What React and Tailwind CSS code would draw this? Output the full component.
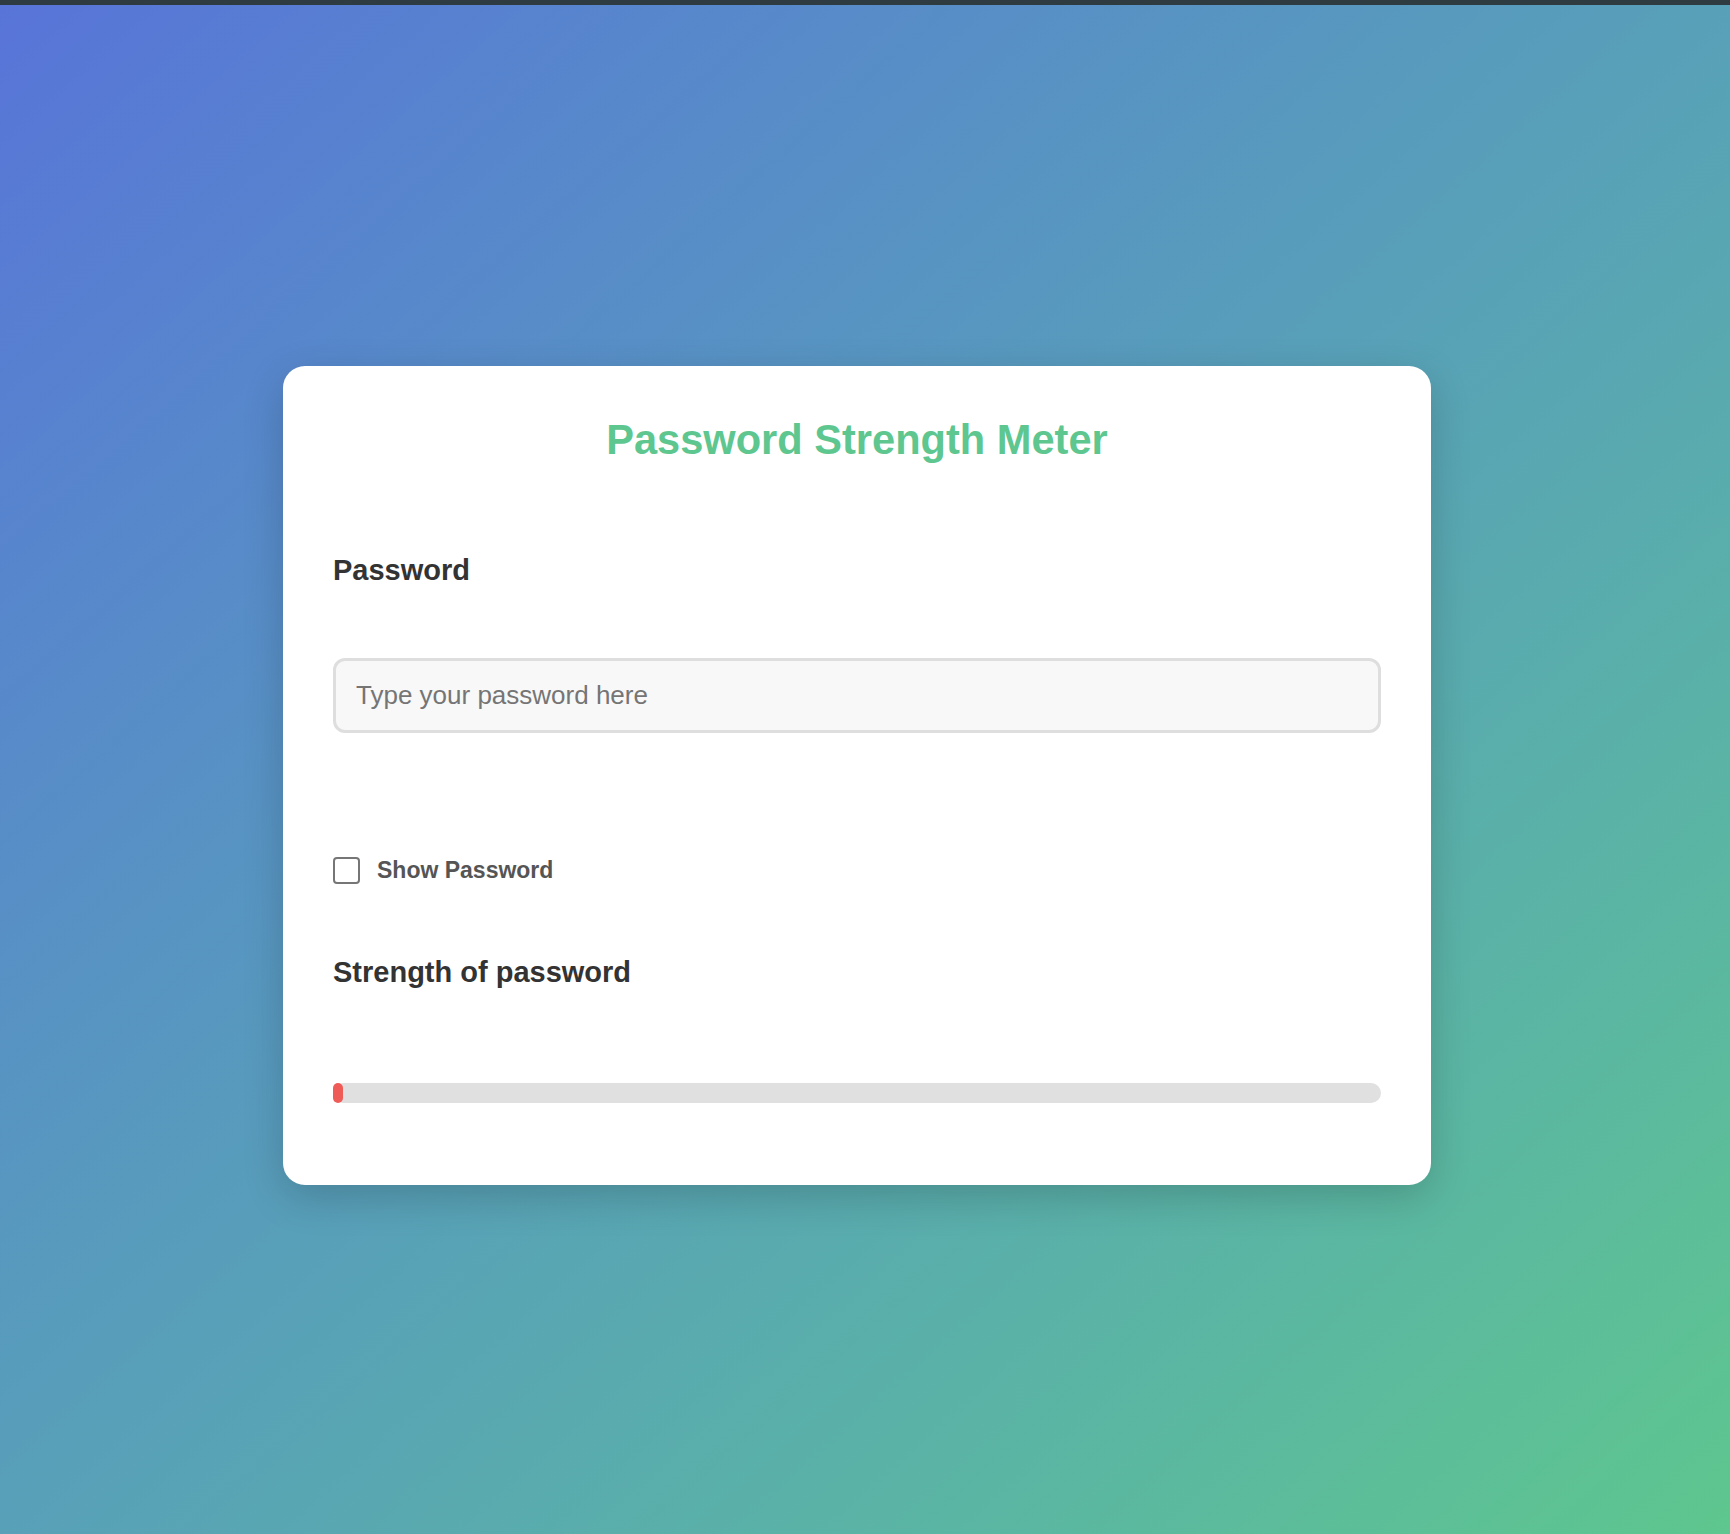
import React from 'react';

export default function App() {
  // Sin contraseña: la barra muestra solo el mínimo en rojo
  const strength = 10;

  return (
    <div className="min-h-screen flex flex-col leading-[normal] font-['Liberation_Sans',Arial,sans-serif]">
      <div className="h-[5px] bg-[#2e3b41]" />
      <div className="flex-1 flex justify-center pt-[361px] pr-[16px] bg-linear-to-br from-[#5874d8] to-[#5ec68e]">
        <div className="w-[1148px] self-start rounded-[22px] bg-white px-[50px] pt-[50px] pb-[82px] shadow-[0_12px_40px_rgba(0,0,0,0.18)]">
          <h1 className="text-center text-[41.6px] font-bold text-[#5ec68f]">
            Password Strength Meter
          </h1>

          <label className="block mt-[90px] text-[29px] font-bold text-[#333333]">
            Password
          </label>
          <input
            type="password"
            placeholder="Type your password here"
            className="mt-[71px] block w-full h-[75px] px-[20px] text-[26px] text-[#333333] bg-[#f8f8f8] border-[3px] border-[#dedede] rounded-[12px] outline-none placeholder:text-[#757575]"
          />

          <div className="mt-[124px] flex items-center gap-[17px]">
            <input
              type="checkbox"
              className="appearance-none m-0 w-[27px] h-[27px] rounded-[4px] border-2 border-[#767676] bg-white"
            />
            <span className="text-[23px] font-bold text-[#555555]">Show Password</span>
          </div>

          <div className="mt-[72px] text-[29px] font-bold text-[#333333]">
            Strength of password
          </div>

          <div className="mt-[94px] h-[20px] w-full rounded-full bg-[#e0e0e0]">
            <div className="h-full rounded-full bg-[#ef5b56]" style={{ width: strength }} />
          </div>
        </div>
      </div>
    </div>
  );
}
